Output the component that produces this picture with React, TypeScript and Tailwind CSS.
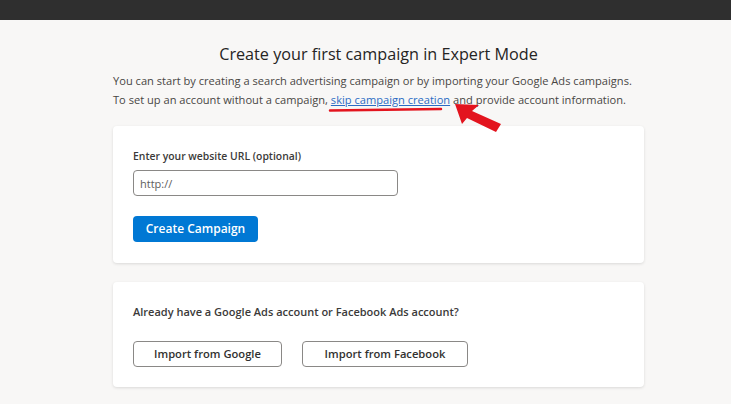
export default function App() {
  return (
    <div
      className="relative min-h-[404px] w-[731px] overflow-hidden bg-[#f8f7f6] text-[#323130]"
      style={{ fontFamily: '"Open Sans", "Noto Sans", Arial, sans-serif' }}
    >
      <div className="h-5 bg-[#2f2f2f]" />
      <div className="ml-[113px] w-[531px]">
        <h1 className="mt-[23px] text-center text-[16.2px] leading-[22px] text-[#252423]">
          Create your first campaign in Expert Mode
        </h1>
        <p className="mt-[6px] whitespace-nowrap text-[11.1px] leading-[19px] text-[#484644]">
          You can start by creating a search advertising campaign or by importing your Google Ads campaigns.
          <br />
          To set up an account without a campaign,{' '}
          <a className="text-[#2b6cc4] underline" href="#">
            skip campaign creation
          </a>{' '}
          and provide account information.
        </p>

        <div className="mt-[17px] rounded-sm bg-white px-5 pb-[21px] pt-[22px] shadow-[0_1px_3px_rgba(0,0,0,0.12)]">
          <label className="block text-[10.4px] font-semibold leading-[16px] text-[#3b3a39]">
            Enter your website URL (optional)
          </label>
          <input
            className="mt-[6px] block h-[26px] w-[265px] rounded-sm border border-[#8a8886] px-[6px] text-[11px] text-[#605e5c] outline-none placeholder:text-[#605e5c]"
            placeholder="http://"
          />
          <button className="mt-5 h-[26px] w-[125px] rounded-sm bg-[#0078d4] text-[12px] font-semibold text-white">
            Create Campaign
          </button>
        </div>

        <div className="mt-[19px] rounded-sm bg-white px-5 pb-5 pt-[22px] shadow-[0_1px_3px_rgba(0,0,0,0.12)]">
          <p className="text-[11px] font-semibold leading-[16px] text-[#3b3a39]">
            Already have a Google Ads account or Facebook Ads account?
          </p>
          <div className="mt-[21px] flex gap-5">
            <button className="h-[26px] w-[149px] rounded-sm border border-[#8a8886] bg-white text-[11.2px] font-semibold text-[#323130]">
              Import from Google
            </button>
            <button className="h-[26px] w-[166px] rounded-sm border border-[#8a8886] bg-white text-[11.2px] font-semibold text-[#323130]">
              Import from Facebook
            </button>
          </div>
        </div>
      </div>

      {/* red annotation */}
      <svg className="pointer-events-none absolute left-0 top-0" width="731" height="404">
        <path d="M330 110.5 L441 109" stroke="#e3141e" strokeWidth="2.5" strokeLinecap="round" fill="none" />
        <polygon points="455,104 479,105 472,111 501,124 496,132 467,118 462,124" fill="#e3141e" />
      </svg>
    </div>
  )
}
